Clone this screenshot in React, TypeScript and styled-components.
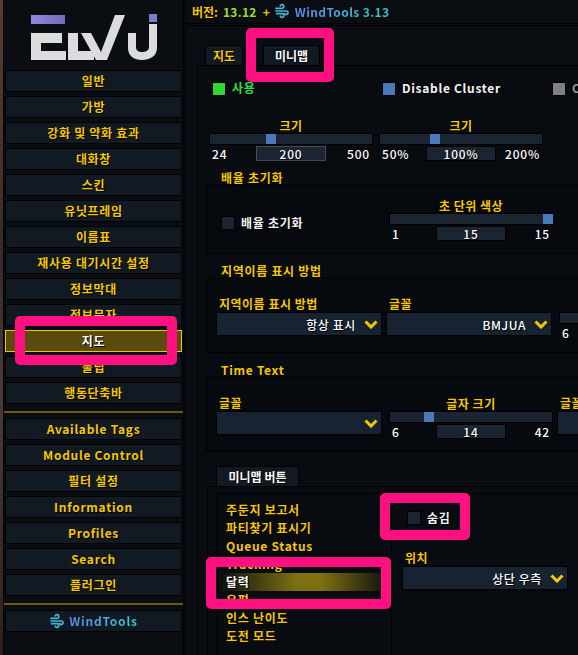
import React from 'react';
import styled, {createGlobalStyle} from 'styled-components';

const GOLD = '#f6c800';
const FONT = '"Noto Sans CJK KR", "Noto Sans", sans-serif';

const GlobalStyle = createGlobalStyle`
  html, body {
    margin: 0;
    padding: 0;
    background: #0a0d12;
  }
`;

const navTop = ['일반', '가방', '강화 및 약화 효과', '대화창', '스킨', '유닛프레임', '이름표', '재사용 대기시간 설정', '정보막대', '정보문자', '지도', '툴팁', '행동단축바'];
const navBottom = ['Available Tags', 'Module Control', '필터 설정', 'Information', 'Profiles', 'Search', '플러그인'];
const treeItems = ['주둔지 보고서', '파티찾기 표시기', 'Queue Status', 'Tracking', '달력', '우편', '인스 난이도', '도전 모드'];

function WindIcon(props: {size: number}) {
    return <svg width={props.size} height={props.size} viewBox="0 0 24 24" fill="none" stroke="#45b4d6" strokeWidth="2.6" strokeLinecap="round">
        <path d="M3 12h15.5a2.6 2.6 0 1 1-2.3 3.8"/>
        <path d="M3 8h9a2.8 2.8 0 1 0-2.6-3.8"/>
        <path d="M4 16h8a2.8 2.8 0 1 1-2.6 3.8"/>
    </svg>;
}

function Logo() {
    return <svg width="134" height="54" viewBox="0 0 134 54">
        <defs>
            <linearGradient id="violet" x1="0" x2="1" y1="0" y2="0">
                <stop offset="0" stopColor="#8f8ae0"/>
                <stop offset="1" stopColor="#6f6cb8"/>
            </linearGradient>
        </defs>
        <rect x="3" y="5" width="34" height="9" fill="url(#violet)"/>
        <rect x="121" y="4" width="8" height="8" fill="#7f7cd0"/>
        <g fill="#dcdcdc">
            <path d="M3 23h31v10H13v8H38v9H3z"/>
            <path d="M40 23h10v18h16v9H40z"/>
            <path d="M53 23h10l10 19L87 5h10L79 50H68z"/>
            <path d="M100 23h8v14c0 4 3 5 6 5s7-1 7-5V14h8v24c0 8-7 12-15 12s-14-4-14-12z"/>
        </g>
    </svg>;
}

function Chevron() {
    return <ChevronIcon width="14" height="9" viewBox="0 0 14 9" fill="none" stroke={GOLD} strokeWidth="3">
        <polyline points="1.5,1.5 7,7 12.5,1.5"/>
    </ChevronIcon>;
}

type SliderProps = {
    label?: string
    min: string
    max: string
    value: string
    position: number
    focused?: boolean
}

function Slider(props: SliderProps) {
    return <SliderColumn>
        <SliderLabel>{props.label}</SliderLabel>
        <Track>
            <Thumb style={{left: props.position * 153}}/>
        </Track>
        <ValueRow>
            <span>{props.min}</span>
            <ValueBox $focused={props.focused}>{props.value}</ValueBox>
            <MaxValue>{props.max}</MaxValue>
        </ValueRow>
    </SliderColumn>;
}

type DropdownProps = {
    label: string
    value?: string
}

function Dropdown(props: DropdownProps) {
    return <div>
        <FieldLabel>{props.label}</FieldLabel>
        <Select>
            <span>{props.value}</span>
            <Chevron/>
        </Select>
    </div>;
}

export default function App() {
    return <>
        <GlobalStyle/>
        <Page>
            <Strip/>
            <Sidebar>
                <LogoWrap><Logo/></LogoWrap>
                <NavList>
                    {navTop.map(name => <NavButton key={name} $active={name === '지도'}>{name}</NavButton>)}
                </NavList>
                <Separator/>
                <NavList>
                    {navBottom.map(name => <NavButton key={name}>{name}</NavButton>)}
                </NavList>
                <Separator/>
                <NavList>
                    <NavButton><WindIcon size={16}/><GradientText>WindTools</GradientText></NavButton>
                </NavList>
            </Sidebar>
            <Main>
                <Header>
                    <Version>버전:</Version>
                    <VersionNumber>13.12</VersionNumber>
                    <Plus>+</Plus>
                    <WindIcon size={16}/>
                    <HeaderTools>WindTools 3.13</HeaderTools>
                </Header>
                <Content>
                    <TabRow>
                        <Tab $width={38} $color={GOLD}>지도</Tab>
                        <Tab $width={57} $color="#fff">미니맵</Tab>
                    </TabRow>
                    <Panel>
                        <CheckRow>
                            <CheckItem><CheckBox $color="#2fd82f"/><CheckLabel $color="#2fe04a">사용</CheckLabel></CheckItem>
                            <CheckItem><CheckBox $color="#4a7ab8"/><CheckLabel>Disable Cluster</CheckLabel></CheckItem>
                            <CheckItem><CheckBox $color="#808080"/><CheckLabel $color="#999">Clock</CheckLabel></CheckItem>
                        </CheckRow>
                        <SliderRow>
                            <Slider label="크기" min="24" max="500" value="200" position={0.364} focused/>
                            <Slider label="크기" min="50%" max="200%" value="100%" position={0.33}/>
                        </SliderRow>

                        <GroupTitle>배율 초기화</GroupTitle>
                        <Group>
                            <ResetCheck><CheckBox/><CheckLabel>배율 초기화</CheckLabel></ResetCheck>
                            <Slider label="초 단위 색상" min="1" max="15" value="15" position={1}/>
                        </Group>

                        <GroupTitle>지역이름 표시 방법</GroupTitle>
                        <FieldGroup>
                            <Dropdown label="지역이름 표시 방법" value="항상 표시"/>
                            <Dropdown label="글꼴" value="BMJUA"/>
                            <InlineSlider><Slider label="글꼴 크기" min="6" max="42" value="14" position={0.2}/></InlineSlider>
                        </FieldGroup>

                        <GroupTitle>Time Text</GroupTitle>
                        <FieldGroup>
                            <Dropdown label="글꼴"/>
                            <InlineSlider><Slider label="글자 크기" min="6" max="42" value="14" position={0.222}/></InlineSlider>
                            <Dropdown label="글꼴 외곽선"/>
                        </FieldGroup>

                        <SubTab>미니맵 버튼</SubTab>
                        <SubPanel>
                            <Tree>
                                {treeItems.map(name => <TreeItem key={name} $active={name === '달력'}>{name}</TreeItem>)}
                            </Tree>
                            <TreeDetail>
                                <HideRow><CheckBox/><CheckLabel>숨김</CheckLabel></HideRow>
                                <Dropdown label="위치" value="상단 우측"/>
                            </TreeDetail>
                        </SubPanel>
                    </Panel>
                </Content>
            </Main>
            <Highlight $x={246} $y={28} $w={88} $h={54}/>
            <Highlight $x={15} $y={316} $w={162} $h={49}/>
            <Highlight $x={380} $y={493} $w={90} $h={47}/>
            <Highlight $x={206} $y={557} $w={185} $h={52}/>
        </Page>
    </>;
}

const Page = styled.div`
  position: relative;
  display: flex;
  width: 578px;
  height: 655px;
  overflow: hidden;
  background: #0a0d12;
  font-family: ${FONT};
  font-size: 12px;
  font-weight: 700;
  line-height: 15px;
  color: #fff;
  text-shadow: 1px 1px 0 #000;
  white-space: nowrap;
`

const Strip = styled.div`
  flex: 0 0 3px;
  background: linear-gradient(#5b3a30, #3a2a28 40%, #4a3a38 60%, #30201c);
`

const Sidebar = styled.nav`
  flex: 0 0 179px;
  display: flex;
  flex-direction: column;
  border-left: 1px solid #000;
  border-right: 1px solid #000;
`

const LogoWrap = styled.div`
  height: 70px;
  padding: 10px 0 0 24px;
  box-sizing: border-box;
`

const NavList = styled.div`
  display: flex;
  flex-direction: column;
  gap: 4px;
  padding-left: 1px;
`

const NavButton = styled.div<{$active?: boolean}>`
  box-sizing: border-box;
  width: 177px;
  height: 22px;
  padding-bottom: 1px;
  display: flex;
  align-items: center;
  justify-content: center;
  gap: 4px;
  letter-spacing: 0.7px;
  border: 1px solid ${props => props.$active ? '#f0c800' : '#000'};
  background: ${props => props.$active ? '#5a4b0c' : '#111a23'};
  color: ${props => props.$active ? '#fff' : GOLD};
`

const Separator = styled.div`
  height: 2px;
  margin: 7px 0 5px;
  background: #6b5a10;
`

const GradientText = styled.span`
  background: linear-gradient(90deg, #5f86ea, #3ccbc4);
  -webkit-background-clip: text;
  background-clip: text;
  color: transparent;
  text-shadow: none;
  letter-spacing: 0.8px;
`

const HeaderTools = styled(GradientText)`
  margin-left: 2px;
  letter-spacing: 0.4px;
`

const Main = styled.main`
  flex: 1;
  min-width: 0;
  margin-left: 1px;
  display: flex;
  flex-direction: column;
`

const Header = styled.header`
  box-sizing: border-box;
  height: 24px;
  flex: none;
  display: flex;
  align-items: center;
  gap: 3px;
  padding: 0 0 1px 6px;
  border-left: 1px solid #000;
  border-bottom: 1px solid #000;
`

const Version = styled.span`
  color: ${GOLD};
`

const VersionNumber = styled.span`
  margin-left: 2px;
  color: #9be02c;
  letter-spacing: 0.3px;
`

const Plus = styled.span`
  color: ${GOLD};
  margin: 0 1px 0 3px;
`

const Content = styled.div`
  flex: 1;
  min-height: 0;
  margin-top: 1px;
  padding: 19px 0 0 11px;
  border-left: 1px solid #000;
  border-top: 1px solid #000;
`

const TabRow = styled.div`
  display: flex;
  gap: 20px;
  padding-left: 8px;
`

const Tab = styled.div<{$width: number, $color: string}>`
  box-sizing: border-box;
  width: ${props => props.$width}px;
  height: 20px;
  display: flex;
  align-items: center;
  justify-content: center;
  background: #111a23;
  border: 1px solid #000;
  border-bottom: none;
  color: ${props => props.$color};
`

const Panel = styled.section`
  height: 100%;
  padding: 15px 0 0 11px;
  background: #080b0f;
  border-left: 1px solid #000;
  border-top: 1px solid #000;
`

const CheckRow = styled.div`
  display: flex;
  height: 15px;
  padding-left: 3px;
`

const CheckItem = styled.div`
  flex: 0 0 170px;
  height: 15px;
  display: flex;
  align-items: center;
  gap: 6px;
`

const CheckBox = styled.div<{$color?: string}>`
  box-sizing: border-box;
  flex: none;
  width: 14px;
  height: 14px;
  border: 1px solid #000;
  background: ${props => props.$color || '#1a2531'};
`

const CheckLabel = styled.span<{$color?: string}>`
  padding-bottom: 2px;
  color: ${props => props.$color || '#f4f4f4'};
  letter-spacing: 0.7px;
`

const SliderRow = styled.div`
  display: flex;
  gap: 6px;
  margin-top: 22px;
`

const SliderColumn = styled.div`
  flex: none;
  width: 164px;
`

const SliderLabel = styled.div`
  height: 15px;
  text-align: center;
  color: ${GOLD};
  letter-spacing: 0.5px;
`

const Track = styled.div`
  position: relative;
  box-sizing: border-box;
  height: 12px;
  background: #1a2531;
  border: 1px solid #000;
`

const Thumb = styled.div`
  position: absolute;
  top: 0;
  width: 10px;
  height: 10px;
  background: #4a7ab8;
`

const ValueRow = styled.div`
  display: grid;
  grid-template-columns: 1fr 70px 1fr;
  align-items: center;
  padding: 1px 3px 0;
  margin: 0 -3px;
  letter-spacing: 0.8px;
  font-weight: 500;

  span:first-child {
    padding-left: 3px;
  }
`

const MaxValue = styled.span`
  text-align: right;
  padding-right: 3px;
`

const ValueBox = styled.div<{$focused?: boolean}>`
  box-sizing: border-box;
  width: 70px;
  height: 15px;
  text-align: center;
  line-height: 13px;
  background: #1a2531;
  border: 1px solid ${props => props.$focused ? '#4a4a4a' : '#000'};
`

const GroupTitle = styled.h3`
  margin: 9px 0 0 -3px;
  padding-left: 15px;
  height: 15px;
  font: inherit;
  color: ${GOLD};
  letter-spacing: 0.7px;
`

const Group = styled.div`
  box-sizing: border-box;
  height: 69px;
  margin-left: -3px;
  padding: 12px 0 0 14px;
  display: flex;
  border: 1px solid #000;
  border-right: none;
  background: #06090d;
`

const ResetCheck = styled.div`
  flex: 0 0 168px;
  display: flex;
  gap: 6px;
  align-items: center;
  height: 14px;
  margin-top: 18px;
`

const FieldGroup = styled.div`
  box-sizing: border-box;
  height: 75px;
  margin-left: -3px;
  padding: 17px 0 0 9px;
  display: flex;
  gap: 4px;
  border: 1px solid #000;
  border-right: none;
  background: #06090d;
`

const InlineSlider = styled.div`
  margin: 1px 0 0 3px;
`

const FieldLabel = styled.div`
  height: 16px;
  padding-left: 3px;
  color: ${GOLD};
  letter-spacing: 0.5px;
`

const Select = styled.div`
  box-sizing: border-box;
  width: 166px;
  height: 24px;
  display: flex;
  align-items: center;
  justify-content: flex-end;
  gap: 8px;
  padding-right: 3px;
  background: #172330;
  border: 1px solid #000;
  letter-spacing: 0.6px;
  font-weight: 500;
`

const ChevronIcon = styled.svg`
  flex: none;
`

const SubTab = styled.div`
  box-sizing: border-box;
  width: 83px;
  height: 20px;
  margin: 14px 0 0 7px;
  display: flex;
  align-items: center;
  justify-content: center;
  background: #111a23;
  border: 1px solid #000;
  border-bottom: none;
`

const SubPanel = styled.div`
  margin-left: -2px;
  padding: 6px 0 0 9px;
  display: flex;
  height: 200px;
  border-left: 1px solid #000;
  border-top: 1px solid #000;
`

const Tree = styled.div`
  flex: 0 0 175px;
  box-sizing: border-box;
  padding-top: 7px;
  border: 1px solid #000;
  border-bottom: none;
`

const TreeItem = styled.div<{$active?: boolean}>`
  height: 18px;
  line-height: 18px;
  padding-left: 8px;
  letter-spacing: 0.7px;
  color: ${props => props.$active ? '#fff' : GOLD};
  background: ${props => props.$active ? 'linear-gradient(90deg, transparent, #7d7010 45%, #7d7010 60%, transparent)' : 'none'};
`

const TreeDetail = styled.div`
  flex: 1;
  padding: 17px 0 0 10px;
  border-top: 1px solid #000;
`

const HideRow = styled.div`
  display: flex;
  align-items: center;
  gap: 6px;
  height: 14px;
  margin: 0 0 25px 5px;
`

const Highlight = styled.div<{$x: number, $y: number, $w: number, $h: number}>`
  position: absolute;
  box-sizing: border-box;
  left: ${props => props.$x}px;
  top: ${props => props.$y}px;
  width: ${props => props.$w}px;
  height: ${props => props.$h}px;
  border: 10px solid #ff1080;
  border-radius: 5px;
`
